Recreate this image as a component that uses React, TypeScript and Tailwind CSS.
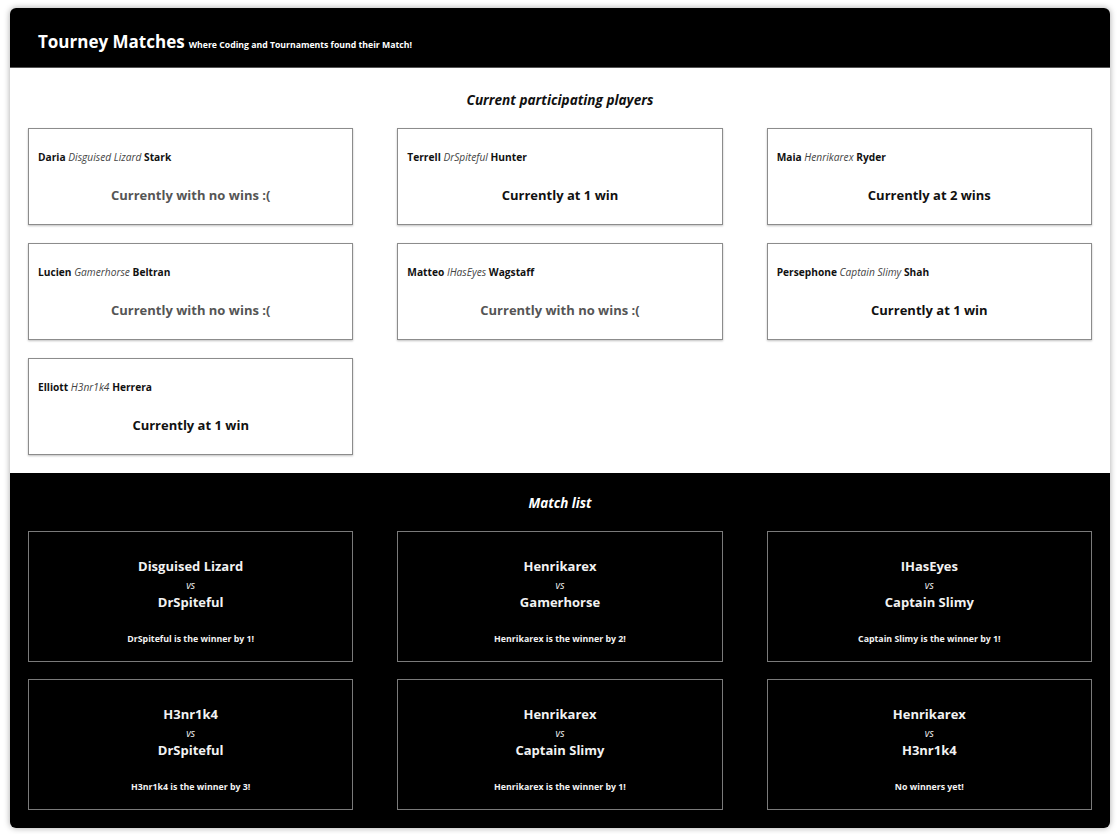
import type { ReactElement } from "react";

type Player = { first: string; nick: string; last: string; wins: number };
type Match = { a: string; b: string; result: string };

const players: Player[] = [
    { first: "Daria", nick: "Disguised Lizard", last: "Stark", wins: 0 },
    { first: "Terrell", nick: "DrSpiteful", last: "Hunter", wins: 1 },
    { first: "Maia", nick: "Henrikarex", last: "Ryder", wins: 2 },
    { first: "Lucien", nick: "Gamerhorse", last: "Beltran", wins: 0 },
    { first: "Matteo", nick: "IHasEyes", last: "Wagstaff", wins: 0 },
    { first: "Persephone", nick: "Captain Slimy", last: "Shah", wins: 1 },
    { first: "Elliott", nick: "H3nr1k4", last: "Herrera", wins: 1 },
];

const matches: Match[] = [
    { a: "Disguised Lizard", b: "DrSpiteful", result: "DrSpiteful is the winner by 1!" },
    { a: "Henrikarex", b: "Gamerhorse", result: "Henrikarex is the winner by 2!" },
    { a: "IHasEyes", b: "Captain Slimy", result: "Captain Slimy is the winner by 1!" },
    { a: "H3nr1k4", b: "DrSpiteful", result: "H3nr1k4 is the winner by 3!" },
    { a: "Henrikarex", b: "Captain Slimy", result: "Henrikarex is the winner by 1!" },
    { a: "Henrikarex", b: "H3nr1k4", result: "No winners yet!" },
];

function winsText(wins: number): string {
    if (wins === 0) return "Currently with no wins :(";
    return `Currently at ${wins} win${wins === 1 ? "" : "s"}`;
}

function PlayerCard({ p }: { p: Player }): ReactElement {
    return (
        <div className="h-[97px] border border-[#8c8c8c] shadow-[0_1px_2px_rgba(0,0,0,0.25)] bg-white flex flex-col px-[9px]">
            <p className="mt-[21px] text-[10.2px] leading-[14px] text-[#111]">
                <span className="font-bold">{p.first}</span>{" "}
                <span className="italic text-[#444]">{p.nick}</span>{" "}
                <span className="font-bold">{p.last}</span>
            </p>
            <p
                className={`mt-[22px] text-center text-[13px] leading-[18px] font-bold ${
                    p.wins === 0 ? "text-[#555]" : "text-[#111]"
                }`}
            >
                {winsText(p.wins)}
            </p>
        </div>
    );
}

function MatchCard({ m }: { m: Match }): ReactElement {
    return (
        <div className="h-[131px] border border-[#7a7a7a] flex flex-col items-center text-[#f2f2f2]">
            <p className="mt-[25px] text-[13px] leading-[18px] font-bold">{m.a}</p>
            <p className="mt-[1px] text-[10px] leading-[18px] italic">vs</p>
            <p className="-mt-[1px] text-[13px] leading-[18px] font-bold">{m.b}</p>
            <p className="mt-[22px] text-[8.8px] leading-[12px] font-bold">{m.result}</p>
        </div>
    );
}

export default function App(): ReactElement {
    return (
        <div className="bg-white min-h-[834px] pl-[10px] pr-[9px] pt-[8px] pb-[8px] font-['Open_Sans',sans-serif]">
            <div className="rounded-[6px] overflow-hidden shadow-[0_0_6px_rgba(0,0,0,0.35)]">
                {/* HEADER */}
                <header className="bg-black h-[60px] border-b border-[#555] flex items-baseline pt-[23px] px-[28px] gap-[4px] text-white">
                    <h1 className="text-[17px] leading-[22px] font-bold">Tourney Matches</h1>
                    <span className="text-[8.7px] font-bold">Where Coding and Tournaments found their Match!</span>
                </header>

                {/* PLAYERS */}
                <section className="bg-white px-[18px] pt-[22px] pb-[18px]">
                    <h2 className="text-center text-[13.6px] leading-[20px] font-bold italic text-[#111] mb-[18px]">
                        Current participating players
                    </h2>
                    <div className="grid grid-cols-3 gap-x-[44px] gap-y-[18px]">
                        {players.map((p) => (
                            <PlayerCard key={p.first} p={p} />
                        ))}
                    </div>
                </section>

                {/* MATCHES */}
                <section className="bg-black px-[18px] pt-[20px] pb-[18px]">
                    <h2 className="text-center text-[13.4px] leading-[20px] font-bold italic text-white mb-[18px]">
                        Match list
                    </h2>
                    <div className="grid grid-cols-3 gap-x-[44px] gap-y-[17px]">
                        {matches.map((m, i) => (
                            <MatchCard key={i} m={m} />
                        ))}
                    </div>
                </section>
            </div>
        </div>
    );
}
